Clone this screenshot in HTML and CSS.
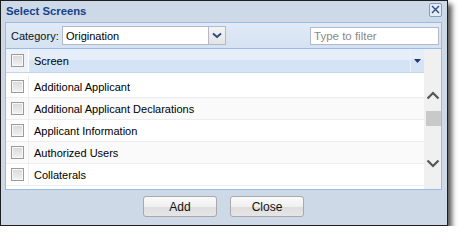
FILE: index.html
```html
<!DOCTYPE html>
<html lang="en">
<head>
    <meta charset="UTF-8">
    <title>Select Screens</title>
    <link rel="stylesheet" href="styles.css">
</head>
<body>
    <div class="window">
        <div class="title-bar">
            <span class="title">Select Screens</span>
            <span class="close-btn">
                <svg width="11" height="11" viewBox="0 0 11 11"><path d="M2 2L9 9M9 2L2 9" stroke="#2b4a86" stroke-width="1.4"/></svg>
            </span>
        </div>
        <div class="panel">
            <div class="toolbar">
                <label class="cat-label">Category:</label>
                <div class="combo">
                    <span class="combo-text">Origination</span>
                    <span class="combo-btn">
                        <svg width="10" height="7" viewBox="0 0 10 7"><path d="M1 1.5L5 5L9 1.5" fill="none" stroke="#2b4a86" stroke-width="2"/></svg>
                    </span>
                </div>
                <div class="filter">Type to filter</div>
            </div>
            <div class="grid">
                <div class="grid-main">
                    <div class="grid-header">
                        <div class="check-cell"><span class="checkbox"></span></div>
                        <div class="header-name">Screen</div>
                        <div class="header-menu">
                            <svg width="7" height="4" viewBox="0 0 7 4"><path d="M0 0H7L3.5 4Z" fill="#1d3a70"/></svg>
                        </div>
                    </div>
                    <div class="rows">
                        <div class="row">
                            <div class="check-cell"><span class="checkbox"></span></div>
                            <div class="cell">Additional Applicant</div>
                        </div>
                        <div class="row alt">
                            <div class="check-cell"><span class="checkbox"></span></div>
                            <div class="cell">Additional Applicant Declarations</div>
                        </div>
                        <div class="row">
                            <div class="check-cell"><span class="checkbox"></span></div>
                            <div class="cell">Applicant Information</div>
                        </div>
                        <div class="row alt">
                            <div class="check-cell"><span class="checkbox"></span></div>
                            <div class="cell">Authorized Users</div>
                        </div>
                        <div class="row">
                            <div class="check-cell"><span class="checkbox"></span></div>
                            <div class="cell">Collaterals</div>
                        </div>
                    </div>
                </div>
                <div class="scrollbar">
                    <svg class="arrow-up" width="14" height="9" viewBox="0 0 14 9"><path d="M1.5 7.5L7 2L12.5 7.5" fill="none" stroke="#555" stroke-width="2.2"/></svg>
                    <div class="thumb"></div>
                    <svg class="arrow-down" width="14" height="9" viewBox="0 0 14 9"><path d="M1.5 1.5L7 7L12.5 1.5" fill="none" stroke="#555" stroke-width="2.2"/></svg>
                </div>
            </div>
        </div>
        <div class="footer">
            <button class="btn">Add</button>
            <button class="btn">Close</button>
        </div>
    </div>
</body>
</html>
```

FILE: styles.css
```css
body {
    margin: 0;
    background: #fff;
    font-family: 'Liberation Sans', Arial, sans-serif;
    font-size: 11px;
    color: #000;
}
.window {
    width: 446px;
    height: 224px;
    border: 1px solid #1e1e1e;
    background: #cdd9e7;
    box-shadow: 4px 4px 5px rgba(0,0,0,0.65);
}
.title-bar {
    height: 21px;
    display: flex;
    align-items: center;
    justify-content: space-between;
    padding: 0 5px 0 5px;
}
.title {
    font-weight: bold;
    font-size: 11.3px;
    color: #15428b;
    margin-top: -2px;
}
.close-btn {
    width: 11px;
    height: 12px;
    border: 1px solid #7f9dc6;
    border-radius: 2px;
    background: #e4ecf6;
    display: flex;
    align-items: center;
    justify-content: center;
    margin-top: -4px;
}
.panel {
    margin: 0 5px 0 4px;
    border: 1px solid #99bbe8;
    background: #fff;
}
.toolbar {
    height: 25px;
    display: flex;
    align-items: center;
    padding: 0 2px 0 5px;
    background: linear-gradient(#e1eaf6, #d5e2f2);
    border-bottom: 1px solid #99bbe8;
}
.cat-label {
    color: #111;
    font-size: 11px;
    width: 51px;
    margin-top: 1px;
}
.combo {
    width: 162px;
    height: 17px;
    border: 1px solid #b5b8c8;
    background: #fff;
    display: flex;
    align-items: center;
}
.combo-text {
    flex: 1;
    padding-left: 3px;
    font-size: 11px;
}
.combo-btn {
    width: 16px;
    height: 17px;
    border-left: 1px solid #b5b8c8;
    background: linear-gradient(#f4f4f4, #e4e4e4);
    display: flex;
    align-items: center;
    justify-content: center;
}
.filter {
    margin-left: auto;
    width: 124px;
    height: 16px;
    border: 1px solid #b5b8c8;
    background: #fff;
    color: #8a8a8a;
    font-size: 11.5px;
    padding-left: 3px;
    line-height: 16px;
    margin-top: 1px;
}
.grid {
    display: grid;
    grid-template-columns: 1fr 17px;
}
.grid-header {
    height: 23px;
    display: flex;
    background: linear-gradient(#e6eef9 0%, #e6eef9 45%, #d4e3f6 50%, #d4e3f6 100%);
    border-bottom: 1px solid #c3d4ec;
}
.rows {
    padding: 3px 0 3px 0;
}
.check-cell {
    width: 22px;
    display: flex;
    align-items: center;
    justify-content: center;
    border-right: 1px solid #ededed;
}
.grid-header .check-cell {
    background: #eef3fa;
    border-right: 1px solid #fff;
}
.checkbox {
    width: 11px;
    height: 11px;
    border: 1px solid #9a9a9a;
    background: linear-gradient(#d8d8d8, #f2f2f2);
    box-shadow: inset 0 0 0 1px #f8f8f8;
}
.header-name {
    flex: 1;
    display: flex;
    align-items: center;
    padding-left: 5px;
    font-size: 11px;
}
.header-menu {
    width: 13px;
    border-left: 1px solid #eaf1fb;
    display: flex;
    align-items: center;
    justify-content: center;
}
.row {
    height: 21px;
    display: flex;
    border-bottom: 1px solid #ededed;
}
.row.alt {
    background: #fafafa;
}
.cell {
    flex: 1;
    display: flex;
    align-items: center;
    padding-left: 5px;
    font-size: 11px;
}
.scrollbar {
    background: #f0f0f0;
    display: flex;
    flex-direction: column;
    align-items: center;
    padding-top: 42px;
}
.arrow-up {
    display: block;
}
.thumb {
    width: 15px;
    height: 15px;
    margin-top: 11px;
    margin-left: 2px;
    background: #c9c9c9;
}
.arrow-down {
    display: block;
    margin-top: 33px;
}
.footer {
    display: flex;
    justify-content: center;
    gap: 13px;
    padding: 6px 0 0 0;
    margin-left: -1px;
}
.btn {
    width: 74px;
    height: 21px;
    border: 1px solid #a9a9a9;
    border-radius: 3px;
    background: linear-gradient(#fafafa 0%, #f0f0f0 50%, #dedede 55%, #e6e6e6 100%);
    font-family: 'Liberation Sans', Arial, sans-serif;
    font-size: 12px;
    color: #111;
    padding: 0;
}
```
